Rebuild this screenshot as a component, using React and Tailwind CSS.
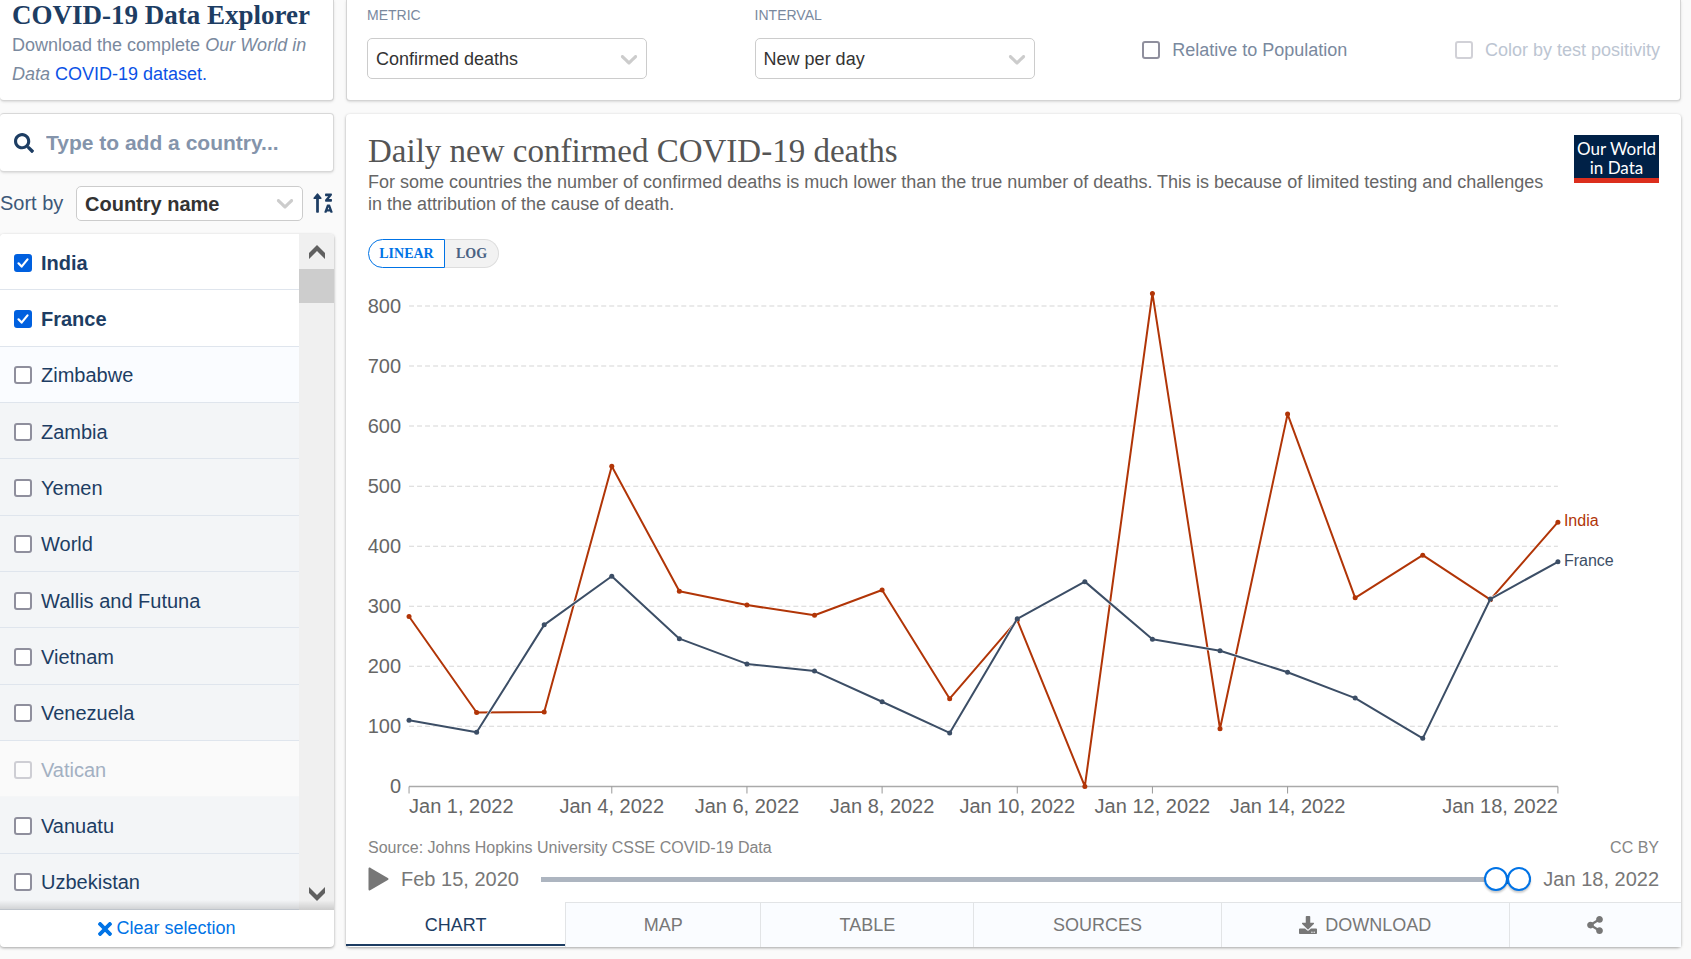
import React, { useState } from 'react';
import { FaSearch, FaDownload, FaShareAlt, FaTimes, FaSortAlphaUpAlt } from 'react-icons/fa';

const countries = [
  { name: 'India', checked: true },
  { name: 'France', checked: true },
  { name: 'Zimbabwe', tone: 'light' },
  { name: 'Zambia' },
  { name: 'Yemen' },
  { name: 'World' },
  { name: 'Wallis and Futuna' },
  { name: 'Vietnam' },
  { name: 'Venezuela' },
  { name: 'Vatican', disabled: true },
  { name: 'Vanuatu' },
  { name: 'Uzbekistan' },
];

const series = [
  {
    name: 'India',
    color: '#b13507',
    labelY: 247,
    values: [283, 123, 124, 533, 325, 302, 285, 327, 146, 277, 0, 821, 96, 620, 314, 385, 311, 440],
  },
  {
    name: 'France',
    color: '#3c4e66',
    labelY: 287,
    values: [110, 90, 269, 350, 246, 204, 192, 141, 89, 279, 341, 245, 226, 190, 147, 80, 312, 374],
  },
];

const ticks = [1, 4, 6, 8, 10, 12, 14, 18];

// plot area inside the svg
const LEFT = 41;
const RIGHT = 1189;
const BOTTOM = 507;
const px = (i) => LEFT + (i * (RIGHT - LEFT)) / 17;
const py = (v) => BOTTOM - v * 0.6;

function Checkbox({ className = '', ...props }) {
  return (
    <span className="relative flex size-[18px] shrink-0">
      <input
        type="checkbox"
        className={`peer size-[18px] appearance-none rounded-[3px] border-2 border-[#8f8f9d] bg-white checked:border-[#0060df] checked:bg-[#0060df] disabled:opacity-40 ${className}`}
        {...props}
      />
      <svg viewBox="0 0 18 18" className="pointer-events-none absolute inset-0 hidden peer-checked:block" fill="none" stroke="white" strokeWidth="2.2" strokeLinecap="round" strokeLinejoin="round">
        <path d="M4.5 9.3 L7.6 12.6 L13.5 5.4" />
      </svg>
    </span>
  );
}

function Select({ id, value, className = '' }) {
  return (
    <div className="relative">
      <select id={id} className={`w-full appearance-none rounded-[5px] border border-[#ccc] bg-white px-2 pt-px text-[#333] ${className}`}>
        <option>{value}</option>
      </select>
      <svg viewBox="0 0 20 20" className="pointer-events-none absolute top-1/2 right-1 size-7 -translate-y-1/2" fill="#ccc">
        <path d="M4.516 7.548c0.436-0.446 1.043-0.481 1.576 0l3.908 3.747 3.908-3.747c0.533-0.481 1.141-0.446 1.574 0 0.436 0.445 0.408 1.197 0 1.615-0.406 0.418-4.695 4.502-4.695 4.502-0.217 0.223-0.502 0.335-0.787 0.335s-0.57-0.112-0.789-0.335c0 0-4.287-4.084-4.695-4.502s-0.436-1.17 0-1.615z" />
      </svg>
    </div>
  );
}

function CountryRow({ country }) {
  const [checked, setChecked] = useState(!!country.checked);
  let bg = 'bg-[#f3f5f7] border-[#dfe5ed]';
  if (country.checked) bg = 'bg-white border-[#dfe5ed]';
  if (country.tone === 'light') bg = 'bg-[#fafcff] border-[#dfe5ed]';
  if (country.disabled) bg = 'bg-[#fafafa] border-[#f5f6f7]';
  return (
    <label className={`flex items-center gap-[9px] border-b pt-[2px] pl-[14px] text-[20px] ${bg} ${country.checked ? 'font-bold' : ''} ${country.disabled ? 'text-[#a3b0c2]' : 'text-[#1d3d63]'}`}>
      <Checkbox checked={checked} disabled={country.disabled} onChange={(e) => setChecked(e.target.checked)} />
      {country.name}
    </label>
  );
}

function Sidebar() {
  return (
    <aside className="flex w-[334px] shrink-0 flex-col">
      <div className="h-[101px] rounded-b-[4px] border-r border-b border-[#d4d4d4] bg-white pl-3 shadow-sm">
        <h1 className="font-['Liberation_Serif',serif] text-[27px] leading-[31px] font-bold whitespace-nowrap text-[#1d3d63]">COVID-19 Data Explorer</h1>
        <p className="text-[18px] leading-[29px] text-[#7a899e]">
          Download the complete <em>Our World in</em> <em>Data</em>{' '}
          <a href="#dataset" className="text-[#0b52e6]">COVID-19 dataset.</a>
        </p>
      </div>

      <label className="mt-3 flex h-[59px] items-center gap-3 rounded-[4px] border border-l-0 border-[#d8d8d8] bg-white pl-[14px] shadow-sm">
        <FaSearch className="size-5 text-[#1d3d63]" />
        <input type="text" aria-label="Add a country" placeholder="Type to add a country..." className="min-w-0 flex-1 text-[21px] font-bold outline-none placeholder:text-[#8494ab] placeholder:opacity-100" />
      </label>

      <div className="mt-[13px] flex h-[36px] items-center">
        <label htmlFor="sort" className="w-[76px] text-[20px] text-[#3d5879]">Sort by</label>
        <div className="flex-1">
          <Select id="sort" value="Country name" className="h-[35px] text-[20px] font-bold" />
        </div>
        <button aria-label="Reverse order" className="ml-[9px] text-[#1d3d63]"><FaSortAlphaUpAlt className="size-[22px]" /></button>
      </div>

      <div className="mt-[13px] flex flex-1 flex-col overflow-hidden rounded-[4px] bg-white shadow-[0_1px_3px_rgba(0,0,0,0.35)]">
        <div className="relative flex flex-1">
          <div className="grid flex-1 grid-rows-12">
            {countries.map((c) => <CountryRow key={c.name} country={c} />)}
          </div>
          {/* scrollbar */}
          <div className="flex w-[35px] flex-col bg-[#f0f0f0]">
            <div className="flex h-[35px] items-center justify-center">
              <svg width="18" height="14" viewBox="0 0 18 14" fill="#606060"><path d="M9 0 L17 8 V14 L9 6 L1 14 V8 Z" /></svg>
            </div>
            <div className="h-[34px] bg-[#cdcdcd]" />
            <div className="flex-1" />
            <div className="flex h-[32px] items-center justify-center">
              <svg width="18" height="14" viewBox="0 0 18 14" fill="#606060"><path d="M9 14 L1 6 V0 L9 8 L17 0 V6 Z" /></svg>
            </div>
          </div>
          <div className="pointer-events-none absolute inset-x-0 bottom-0 h-[10px] bg-linear-to-b from-transparent to-black/15" />
        </div>
        <button className="flex h-[37px] items-center justify-center gap-1 text-[18px] text-[#0073e6]">
          <FaTimes className="h-5 w-[14px]" preserveAspectRatio="xMidYMid slice" />
          Clear selection
        </button>
      </div>
    </aside>
  );
}

function Controls() {
  return (
    <section className="flex h-[101px] items-start justify-between rounded-b-[4px] border-x border-b border-[#d4d4d4] bg-white px-5 shadow-sm">
      <div className="w-[280px]">
        <label htmlFor="metric" className="mt-1 block text-[14px] leading-[22px] text-[#7a899e]">METRIC</label>
        <div className="mt-3"><Select id="metric" value="Confirmed deaths" className="h-[41px] text-[18px]" /></div>
      </div>
      <div className="w-[280px]">
        <label htmlFor="interval" className="mt-1 block text-[14px] leading-[22px] text-[#7a899e]">INTERVAL</label>
        <div className="mt-3"><Select id="interval" value="New per day" className="h-[41px] text-[18px]" /></div>
      </div>
      <label className="mt-[39px] flex items-center gap-3 text-[18px] leading-[22px] text-[#7a899e]">
        <Checkbox />
        Relative to Population
      </label>
      <label className="mt-[39px] flex items-center gap-3 text-[18px] leading-[22px] text-[#bcc5d2]">
        <Checkbox disabled />
        Color by test positivity
      </label>
    </section>
  );
}

function LineChart() {
  return (
    <svg viewBox="0 0 1290 540" className="block h-auto w-full" role="img" aria-label="Daily new confirmed COVID-19 deaths">
      <g fontSize="20" fill="#666">
        {[0, 100, 200, 300, 400, 500, 600, 700, 800].map((v) => (
          <g key={v}>
            {v > 0 && <line x1={LEFT} x2={RIGHT} y1={py(v)} y2={py(v)} stroke="#d6d6d6" strokeDasharray="5 3" />}
            <text x={33} y={py(v) + 7} textAnchor="end">{v}</text>
          </g>
        ))}
        <line x1={LEFT} x2={RIGHT} y1={BOTTOM} y2={BOTTOM} stroke="#aaa" strokeWidth="1.5" />
        {ticks.map((d) => {
          const x = px(d - 1);
          const anchor = d === 1 ? 'start' : d === 18 ? 'end' : 'middle';
          return (
            <g key={d}>
              <line x1={x} x2={x} y1={BOTTOM} y2={BOTTOM + 7} stroke="#999" />
              <text x={x} y={BOTTOM + 27} textAnchor={anchor}>Jan {d}, 2022</text>
            </g>
          );
        })}
      </g>
      {series.map((s) => {
        const points = s.values.map((v, i) => `${px(i)},${py(v)}`).join(' ');
        return (
          <g key={s.name} fill={s.color}>
            <polyline points={points} fill="none" stroke="#fff" strokeWidth="3" />
            <polyline points={points} fill="none" stroke={s.color} strokeWidth="2" strokeLinejoin="round" />
            {s.values.map((v, i) => <circle key={i} cx={px(i)} cy={py(v)} r="2.5" />)}
            <text x={RIGHT + 6} y={s.labelY} fontSize="16">{s.name}</text>
          </g>
        );
      })}
    </svg>
  );
}

const thumb = 'pointer-events-none absolute inset-0 h-6 w-full appearance-none bg-transparent [&::-webkit-slider-thumb]:pointer-events-auto [&::-webkit-slider-thumb]:size-6 [&::-webkit-slider-thumb]:appearance-none [&::-webkit-slider-thumb]:rounded-full [&::-webkit-slider-thumb]:border-2 [&::-webkit-slider-thumb]:border-[#0073e6] [&::-webkit-slider-thumb]:bg-white [&::-webkit-slider-thumb]:shadow-[0_2px_2px_rgba(0,0,0,0.2)]';

function Timeline() {
  const [range, setRange] = useState([686, 703]);
  const left = (range[0] / 703) * 100;
  const right = 100 - (range[1] / 703) * 100;
  return (
    <div className="flex h-6 items-center text-[20px] text-[#777]">
      <button aria-label="Play">
        <svg width="21" height="24" viewBox="0 0 21 24" fill="#777"><path d="M0.5 1.8 C0.5 0.6 1.6 0.2 2.6 0.9 L19.8 11 C20.8 11.6 20.8 12.4 19.8 13 L2.6 23.1 C1.6 23.8 0.5 23.4 0.5 22.2 Z" /></svg>
      </button>
      <span className="ml-3">Feb 15, 2020</span>
      <div className="relative ml-[22px] h-6 flex-1">
        <div className="absolute inset-x-0 top-[10px] h-[5px] bg-[#adb5c0]" />
        <div className="absolute inset-x-3 top-[8px] h-[9px]">
          <div className="absolute h-full bg-[#0073e6]" style={{ left: `${left}%`, right: `${right}%` }} />
        </div>
        <input type="range" aria-label="Start date" min="0" max="703" value={range[0]} onChange={(e) => setRange([Math.min(+e.target.value, range[1]), range[1]])} className={thumb} />
        <input type="range" aria-label="End date" min="0" max="703" value={range[1]} onChange={(e) => setRange([range[0], Math.max(+e.target.value, range[0])])} className={thumb} />
      </div>
      <span className="ml-3">Jan 18, 2022</span>
    </div>
  );
}

const tabClass = 'flex items-center justify-center gap-2 border-t border-l border-[#e2e4e6] bg-[#fafcff]';

function Tabs() {
  return (
    <nav className="grid h-[45px] grid-cols-[219fr_195fr_213fr_247fr_288fr_172fr] text-[18px] text-[#777]">
      <button className="mb-px border-b-2 border-[#1d3d63] pt-1 text-[#1d3d63]">CHART</button>
      <button className={tabClass}>MAP</button>
      <button className={tabClass}>TABLE</button>
      <button className={tabClass}>SOURCES</button>
      <button className={tabClass}>
        <FaDownload className="size-[18px]" />
        DOWNLOAD
      </button>
      <button aria-label="Share" className={tabClass}><FaShareAlt className="size-[18px]" /></button>
    </nav>
  );
}

export default function App() {
  return (
    <div className="flex min-h-screen gap-3 bg-[#fafafa] pr-[10px] pb-3 font-['Liberation_Sans',Arial,sans-serif]">
      <Sidebar />
      <main className="flex min-w-0 flex-1 flex-col">
        <Controls />
        <section className="mt-[13px] flex flex-1 flex-col rounded-[4px] bg-white shadow-[0_1px_3px_rgba(0,0,0,0.35)]">
          <div className="flex flex-1 flex-col pt-[18px] pr-[22px] pl-[22px]">
            <div className="flex items-start justify-between gap-4">
              <div>
                <h2 className="font-['Liberation_Serif',serif] text-[33px] leading-[39px] text-[#555]">Daily new confirmed COVID-19 deaths</h2>
                <p className="max-w-[1190px] text-[18px] leading-[22px] text-[#666]">
                  For some countries the number of confirmed deaths is much lower than the true number of deaths. This is because of limited testing and challenges in the attribution of the cause of death.
                </p>
              </div>
              <div className="mt-[3px] w-[85px] shrink-0 border-b-[5px] border-[#dc2e1d] bg-[#002147] pt-1 pb-px text-center font-[Lato,sans-serif] text-[17px] leading-[19px] whitespace-nowrap text-white">
                Our World<br />in Data
              </div>
            </div>
            <div className="mt-6 flex h-[29px] font-['Liberation_Serif',serif] text-[14px] font-bold">
              <button className="w-[77px] rounded-l-full border border-[#0073e6] bg-white text-[#0073e6]">LINEAR</button>
              <button className="w-[54px] rounded-r-full border border-l-0 border-[#ddd] bg-[#f2f2f2] text-[#4a6283]">LOG</button>
            </div>
            <div className="mt-[11px]"><LineChart /></div>
            <div className="mt-auto flex justify-between text-[16px] leading-[22px] text-[#858585]">
              <span>Source: Johns Hopkins University CSSE COVID-19 Data</span>
              <a href="#license">CC BY</a>
            </div>
            <div className="mt-2 mb-[11px]"><Timeline /></div>
          </div>
          <Tabs />
        </section>
      </main>
    </div>
  );
}
